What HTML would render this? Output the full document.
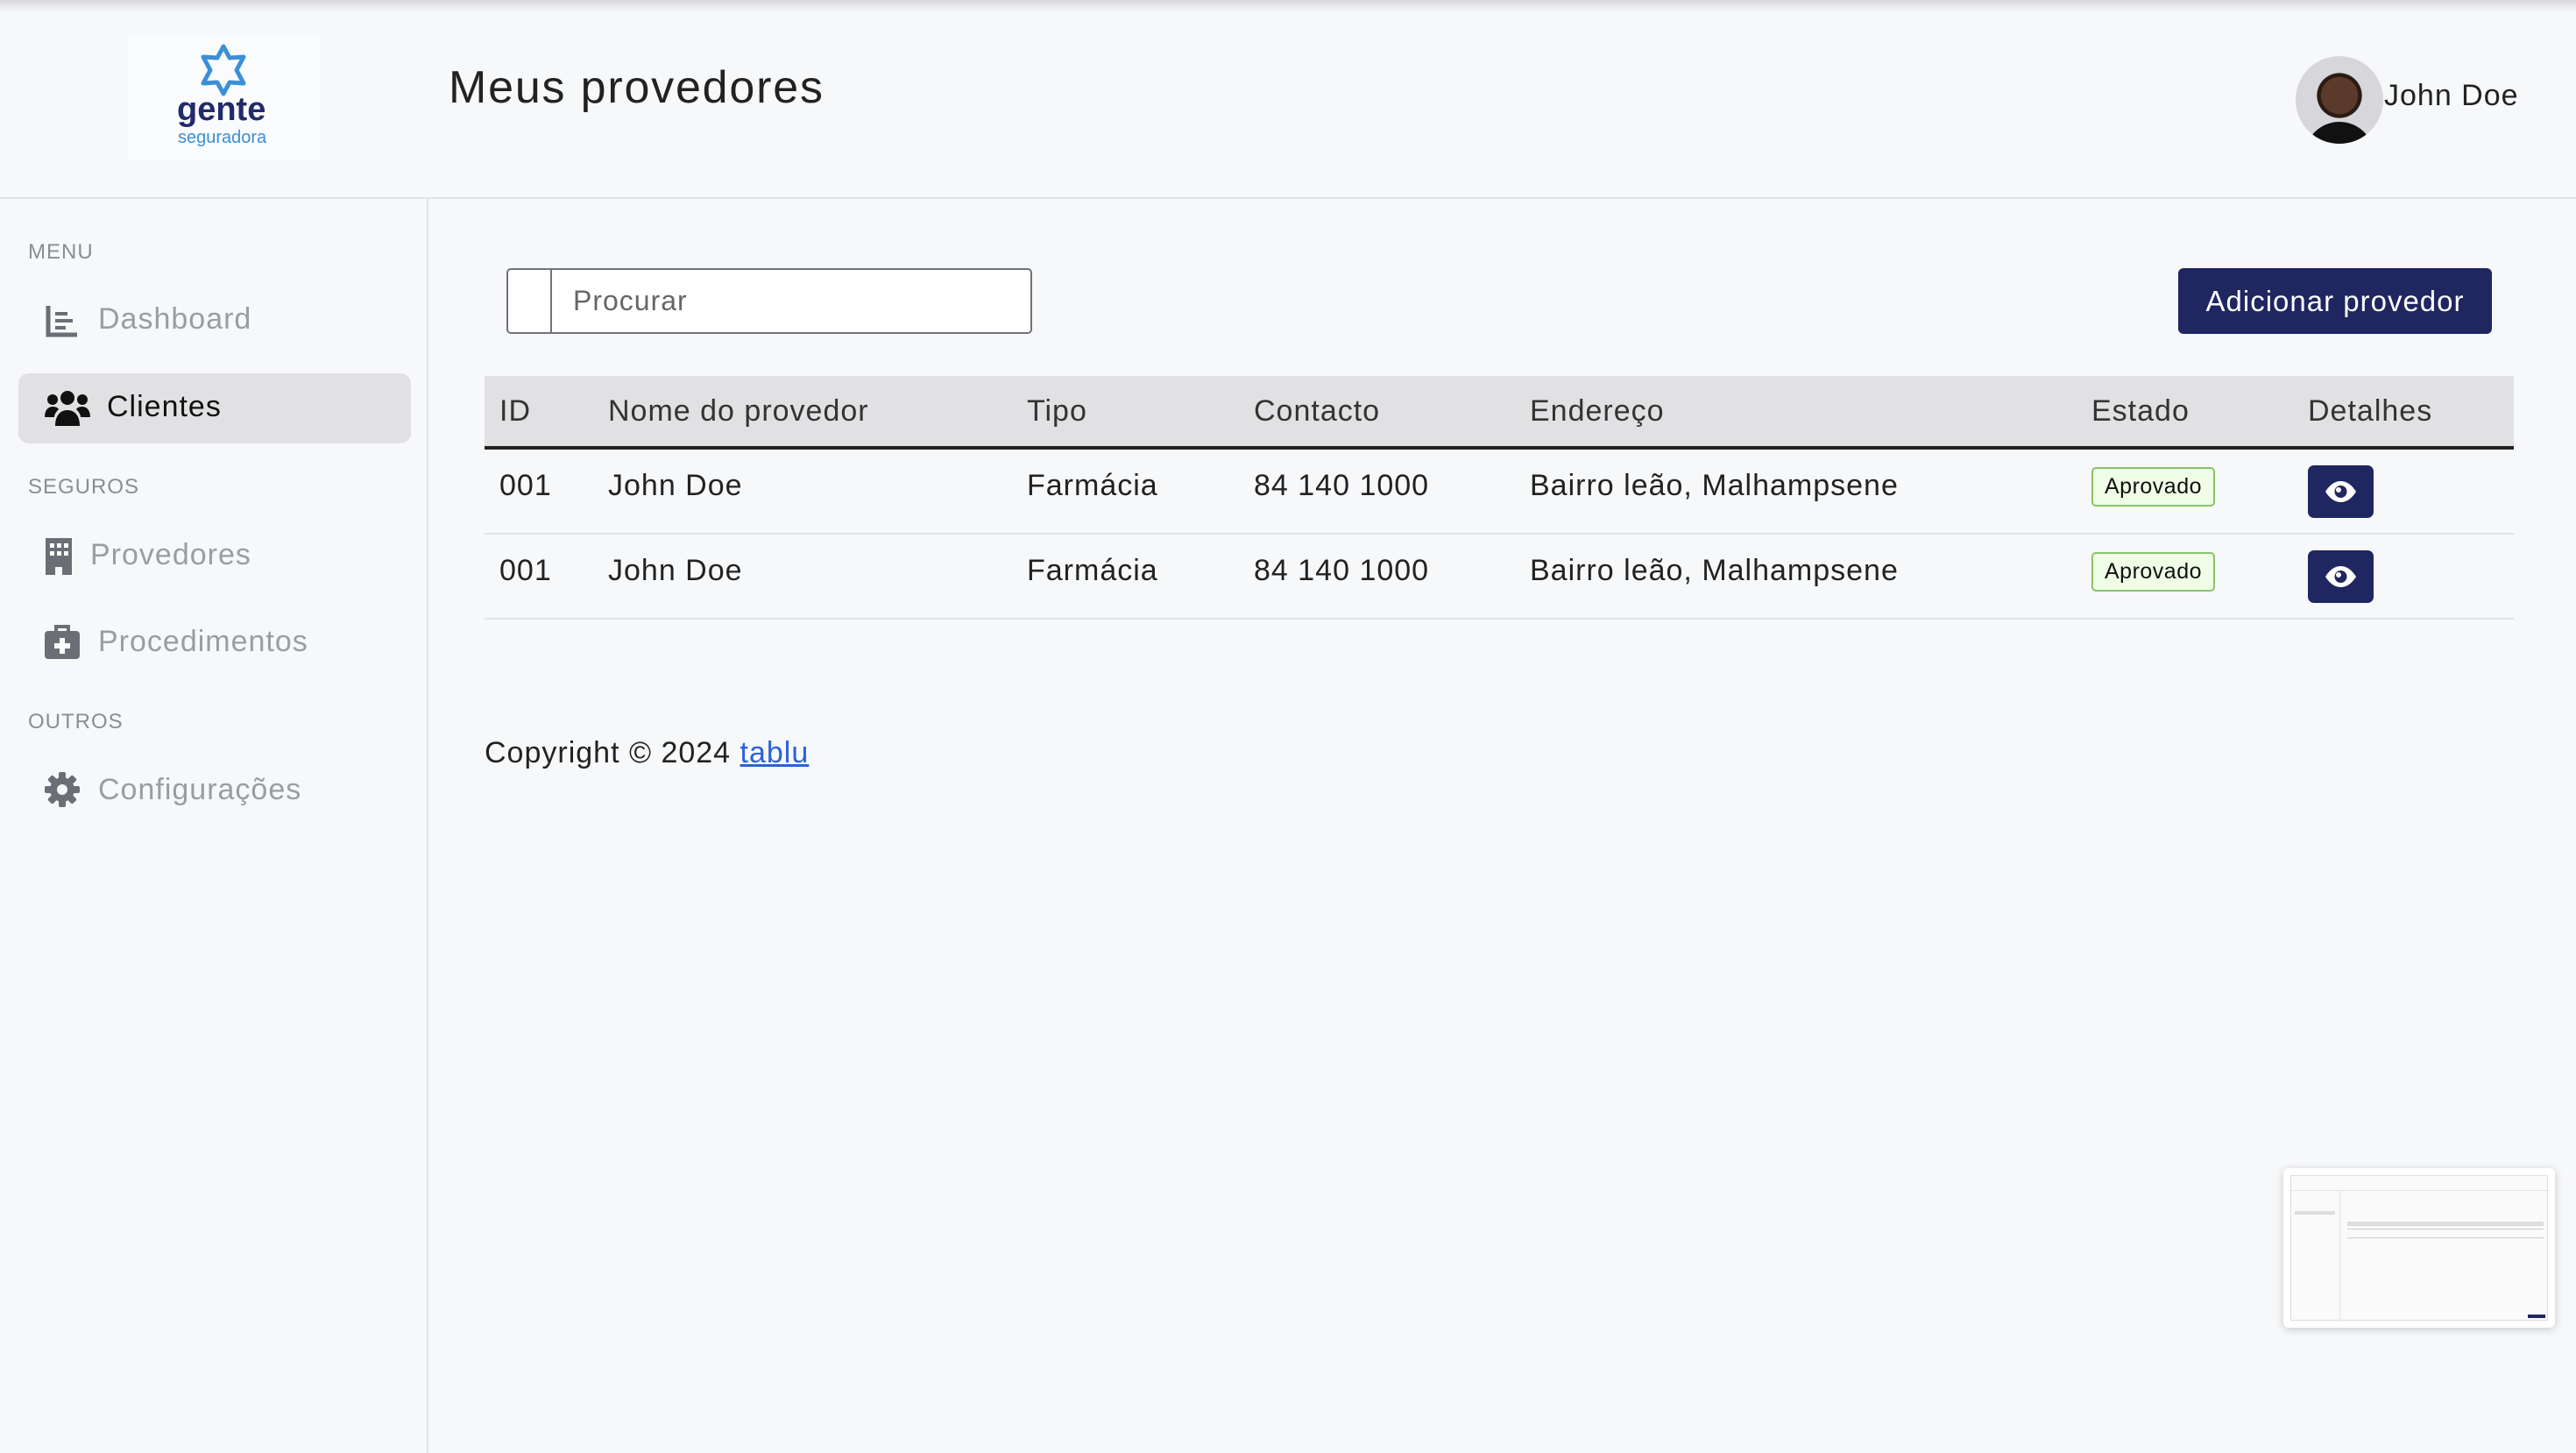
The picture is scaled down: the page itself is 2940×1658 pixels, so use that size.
<!DOCTYPE html>
<html><head><meta charset="utf-8"><style>
*{box-sizing:border-box;margin:0;padding:0}
body{width:2940px;height:1658px;background:#f7f8fa;font-family:"Liberation Sans",sans-serif;color:#222;position:relative;overflow:hidden;letter-spacing:1px}
.a{position:absolute;white-space:nowrap}
.topsh{position:absolute;left:0;top:0;width:2940px;height:14px;background:linear-gradient(#d8d9dc,rgba(247,248,250,0))}
.sec{font-size:24px;color:#8a8d93;letter-spacing:1px}
.nav{font-size:34px;color:#9a9da3}
.th{font-size:34px;color:#333}
.td{font-size:34px;color:#222}
.badge{position:absolute;width:141px;height:45px;background:#effde6;border:2px solid #86c46a;border-radius:5px;font-size:25px;color:#111;text-align:center;line-height:41px;letter-spacing:.5px}
.eye{position:absolute;width:75px;height:60px;background:#1f2660;border-radius:7px}
</style></head><body>
<div class="topsh"></div>
<div class="a" style="left:146px;top:38px;width:220px;height:144px;background:#fafbfc"></div>
<svg class="a" style="left:226px;top:50px" width="58" height="60" viewBox="0 0 58 60"><polygon points="29,3 36,16 52,15 44,30 52,45 36,44 29,57 22,44 6,45 14,30 6,15 22,16" fill="none" stroke="#3a8fd8" stroke-width="5" stroke-linejoin="round"/></svg>
<div class="a" style="left:202px;top:104px;font-size:38px;font-weight:bold;color:#232a6a;letter-spacing:0">gente</div>
<div class="a" style="left:203px;top:146px;font-size:20px;color:#3a8fd8;letter-spacing:0">seguradora</div>
<div class="a" style="left:512px;top:70px;font-size:52px;color:#222;letter-spacing:1.8px">Meus provedores</div>
<div class="a" style="left:2620px;top:64px;width:100px;height:100px;border-radius:50%;background:radial-gradient(circle at 50% 45%,#5a3a2a 0 28%,#2a1c14 29% 34%,#d7d6da 35%);overflow:hidden"><div style="position:absolute;left:10px;top:75px;width:80px;height:40px;background:#111;border-radius:40px 40px 0 0"></div></div>
<div class="a" style="left:2721px;top:90px;font-size:34px;color:#222">John Doe</div>
<div class="a" style="left:0;top:225px;width:2940px;height:2px;background:#e2e3e6"></div>
<div class="a" style="left:487px;top:226px;width:2px;height:1432px;background:#e2e3e6"></div>

<div class="a sec" style="left:32px;top:274px">MENU</div>
<svg class="a" style="left:51px;top:346px" width="40" height="40" viewBox="0 0 40 40"><path d="M4 3v33h33" fill="none" stroke="#6b6e74" stroke-width="5"/><rect x="12" y="10" width="14" height="4" fill="#6b6e74"/><rect x="12" y="18" width="20" height="4" fill="#6b6e74"/><rect x="12" y="26" width="12" height="4" fill="#6b6e74"/></svg>
<div class="a nav" style="left:112px;top:345px">Dashboard</div>
<div class="a" style="left:21px;top:426px;width:448px;height:80px;background:#e1e1e4;border-radius:12px"></div>
<svg class="a" style="left:51px;top:444px" width="52" height="44" viewBox="0 0 52 44"><circle cx="26" cy="10" r="8" fill="#111"/><circle cx="9" cy="12" r="6" fill="#111"/><circle cx="43" cy="12" r="6" fill="#111"/><path d="M12 42c0-12 6-18 14-18s14 6 14 18z" fill="#111"/><path d="M0 32c0-8 4-12 9-12 3 0 6 1 7 3-3 3-5 6-5 9z" fill="#111"/><path d="M52 32c0-8-4-12-9-12-3 0-6 1-7 3 3 3 5 6 5 9z" fill="#111"/></svg>
<div class="a" style="left:122px;top:445px;font-size:34px;color:#111">Clientes</div>
<div class="a sec" style="left:32px;top:542px">SEGUROS</div>
<svg class="a" style="left:52px;top:614px" width="30" height="42" viewBox="0 0 30 42"><path d="M0 0h30v42H19v-9h-8v9H0z" fill="#6b6e74"/><g fill="#fff"><rect x="5" y="6" width="5" height="5"/><rect x="13" y="6" width="5" height="5"/><rect x="21" y="6" width="5" height="5"/><rect x="5" y="15" width="5" height="5"/><rect x="13" y="15" width="5" height="5"/><rect x="21" y="15" width="5" height="5"/></g></svg>
<div class="a nav" style="left:103px;top:614px">Provedores</div>
<svg class="a" style="left:51px;top:712px" width="40" height="40" viewBox="0 0 40 40"><path d="M13 8V3h14v5" fill="none" stroke="#6b6e74" stroke-width="4"/><rect x="0" y="8" width="40" height="32" rx="4" fill="#6b6e74"/><path d="M17 16h6v6h6v6h-6v6h-6v-6h-6v-6h6z" fill="#fff"/></svg>
<div class="a nav" style="left:112px;top:713px">Procedimentos</div>
<div class="a sec" style="left:32px;top:810px">OUTROS</div>
<svg class="a" style="left:51px;top:881px" width="40" height="40" viewBox="0 0 40 40"><circle cx="20" cy="20" r="14" fill="#6b6e74"/><g fill="#6b6e74"><rect x="16" y="0" width="8" height="40" rx="2"/><rect x="16" y="0" width="8" height="40" rx="2" transform="rotate(45 20 20)"/><rect x="16" y="0" width="8" height="40" rx="2" transform="rotate(90 20 20)"/><rect x="16" y="0" width="8" height="40" rx="2" transform="rotate(135 20 20)"/></g><circle cx="20" cy="20" r="6" fill="#f7f8fa"/></svg>
<div class="a nav" style="left:112px;top:882px">Configurações</div>

<div class="a" style="left:578px;top:306px;width:600px;height:75px;border:2px solid #6f7278;border-radius:5px;background:#fff"></div>
<div class="a" style="left:628px;top:307px;width:2px;height:73px;background:#6f7278"></div>
<div class="a" style="left:654px;top:325px;font-size:32px;color:#666">Procurar</div>
<div class="a" style="left:2486px;top:306px;width:358px;height:75px;background:#1f2660;border-radius:6px;color:#fff;font-size:33px;text-align:center;line-height:75px">Adicionar provedor</div>

<div class="a" style="left:553px;top:429px;width:2316px;height:80px;background:#e1e1e4"></div>
<div class="a" style="left:553px;top:509px;width:2316px;height:4px;background:#222"></div>
<div class="a th" style="left:570px;top:450px">ID</div>
<div class="a th" style="left:694px;top:450px">Nome do provedor</div>
<div class="a th" style="left:1172px;top:450px">Tipo</div>
<div class="a th" style="left:1431px;top:450px">Contacto</div>
<div class="a th" style="left:1746px;top:450px">Endereço</div>
<div class="a th" style="left:2387px;top:450px">Estado</div>
<div class="a th" style="left:2634px;top:450px">Detalhes</div>

<div class="a td" style="left:570px;top:535px">001</div>
<div class="a td" style="left:694px;top:535px">John Doe</div>
<div class="a td" style="left:1172px;top:535px">Farmácia</div>
<div class="a td" style="left:1431px;top:535px">84 140 1000</div>
<div class="a td" style="left:1746px;top:535px">Bairro leão, Malhampsene</div>
<div class="badge" style="left:2387px;top:533px">Aprovado</div>
<div class="eye" style="left:2634px;top:531px"><svg width="75" height="60" viewBox="0 0 75 60"><path d="M20 30c5-8 11-12 17.5-12S50 22 55 30c-5 8-11 12-17.5 12S25 38 20 30z" fill="#fff"/><circle cx="37.5" cy="30" r="7" fill="#1f2660"/><circle cx="35" cy="28" r="3" fill="#fff"/></svg></div>
<div class="a" style="left:553px;top:608px;width:2316px;height:2px;background:#e2e3e6"></div>

<div class="a td" style="left:570px;top:632px">001</div>
<div class="a td" style="left:694px;top:632px">John Doe</div>
<div class="a td" style="left:1172px;top:632px">Farmácia</div>
<div class="a td" style="left:1431px;top:632px">84 140 1000</div>
<div class="a td" style="left:1746px;top:632px">Bairro leão, Malhampsene</div>
<div class="badge" style="left:2387px;top:630px">Aprovado</div>
<div class="eye" style="left:2634px;top:628px"><svg width="75" height="60" viewBox="0 0 75 60"><path d="M20 30c5-8 11-12 17.5-12S50 22 55 30c-5 8-11 12-17.5 12S25 38 20 30z" fill="#fff"/><circle cx="37.5" cy="30" r="7" fill="#1f2660"/><circle cx="35" cy="28" r="3" fill="#fff"/></svg></div>
<div class="a" style="left:553px;top:705px;width:2316px;height:2px;background:#e2e3e6"></div>

<div class="a" style="left:553px;top:840px;font-size:34px;color:#222">Copyright © 2024 <span style="color:#2a63d8;text-decoration:underline">tablu</span></div>

<div class="a" style="left:2606px;top:1333px;width:310px;height:182px;background:#fff;border-radius:6px;box-shadow:0 2px 10px rgba(0,0,0,.2)">
<div style="position:absolute;left:8px;top:8px;width:294px;height:166px;border:1px solid #ddd;background:#fafafa">
<div style="position:absolute;left:0;top:16px;width:294px;height:1px;background:#e3e3e3"></div>
<div style="position:absolute;left:55px;top:17px;width:1px;height:149px;background:#e3e3e3"></div>
<div style="position:absolute;left:4px;top:40px;width:46px;height:4px;background:#ddd"></div>
<div style="position:absolute;left:64px;top:52px;width:224px;height:5px;background:#ddd"></div>
<div style="position:absolute;left:64px;top:60px;width:224px;height:1px;background:#ccc"></div>
<div style="position:absolute;left:64px;top:70px;width:224px;height:1px;background:#ccc"></div>
<div style="position:absolute;left:270px;top:158px;width:20px;height:4px;background:#1f2660"></div>
</div></div>
</body></html>
